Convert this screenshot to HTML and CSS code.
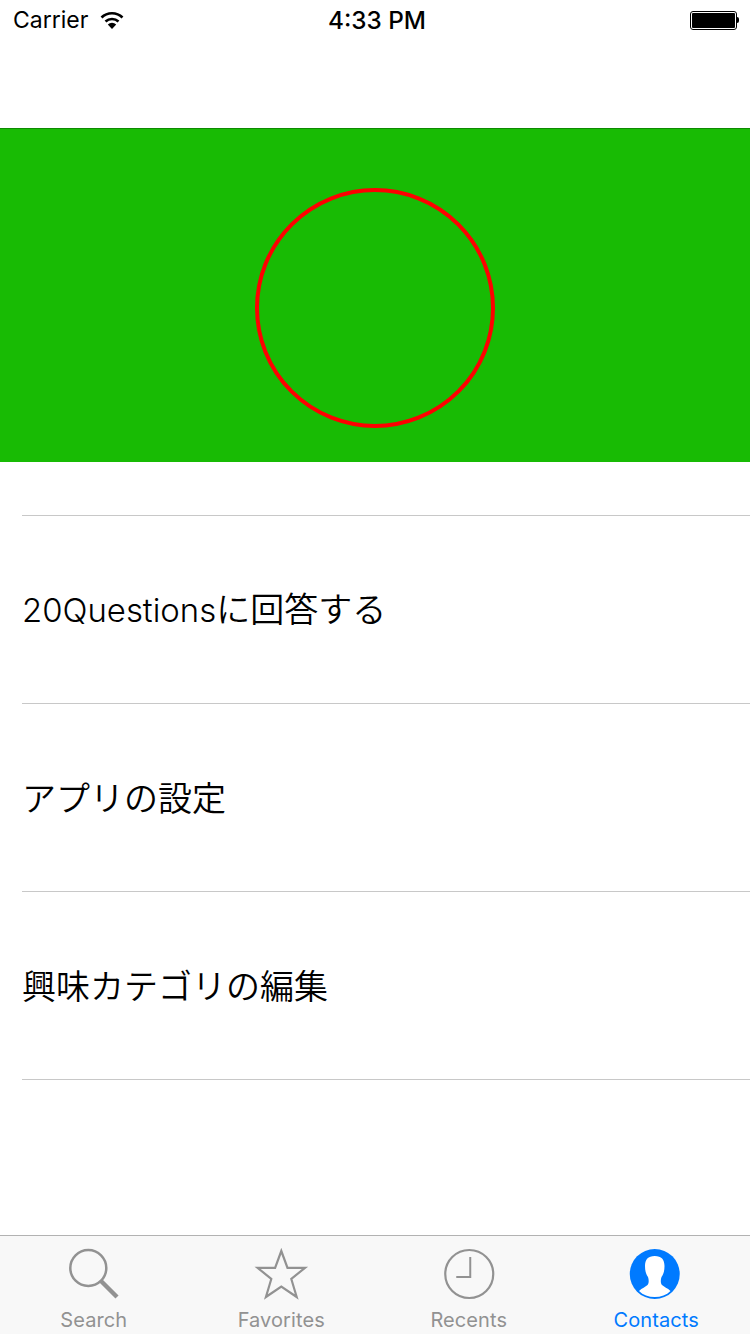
FILE: index.html
```html
<!DOCTYPE html>
<html lang="ja">
<head>
	<meta charset="UTF-8">
	<title>Menu</title>
	<link rel="stylesheet" href="styles.css">
</head>
<body>
	<div class="screen">
		<div class="statusBar">
			<div class="statusLeft">
				<span>Carrier</span>
				<svg class="wifi" width="26" height="20" viewBox="0 0 26 20">
					<path d="M13 19 8.800 14.500a6.200 6.200 0 0 1 8.400 0Z" fill="#000"/>
					<path d="M6.500 11.500a9.500 9.500 0 0 1 13 0" fill="none" stroke="#000" stroke-width="2.600"/>
					<path d="M2.500 7.500a15 15 0 0 1 21 0" fill="none" stroke="#000" stroke-width="2.600"/>
				</svg>
			</div>
			<div class="statusTime">4:33 PM</div>
			<div class="statusRight">
				<div class="battery"><div class="batteryFill"></div></div>
				<div class="batteryTip"></div>
			</div>
		</div>
		<div class="navSpace"></div>
		<div class="hero">
			<div class="heroCircle"></div>
		</div>
		<div class="menu">
			<div class="menuRow"><span><span class="latin">20Questions</span>に回答する</span></div>
			<div class="menuRow"><span>アプリの設定</span></div>
			<div class="menuRow"><span>興味カテゴリの編集</span></div>
		</div>
		<div class="tabBar">
			<div class="tabItem">
				<svg class="tabIcon" width="60" height="56" viewBox="0 0 60 56">
					<circle cx="24.300" cy="22" r="18" fill="none" stroke="#929292" stroke-width="2.500"/>
					<path d="M37 35 53 51" fill="none" stroke="#929292" stroke-width="4.500"/>
				</svg>
				<span class="tabLabel">Search</span>
			</div>
			<div class="tabItem">
				<svg class="tabIcon" width="60" height="56" viewBox="0 0 60 56">
					<path d="M30.300 5 36.500 21.800 54 21.800 40.300 33 45.700 51 30.300 40.500 14.900 51 20.300 33 6.600 21.800 24.100 21.800Z" fill="none" stroke="#929292" stroke-width="2.200"/>
				</svg>
				<span class="tabLabel">Favorites</span>
			</div>
			<div class="tabItem">
				<svg class="tabIcon" width="60" height="56" viewBox="0 0 60 56">
					<circle cx="30.250" cy="28" r="24" fill="none" stroke="#929292" stroke-width="2.200"/>
					<path d="M31.250 11V31H17.250" fill="none" stroke="#929292" stroke-width="2"/>
				</svg>
				<span class="tabLabel">Recents</span>
			</div>
			<div class="tabItem active">
				<svg class="tabIcon" width="60" height="56" viewBox="0 0 60 56">
					<circle cx="28.750" cy="28" r="25" fill="#007aff"/>
					<path d="M28.750 10C35.500 10 38.500 13.500 38.500 20 38.500 25 37.500 28 35.500 31 34.500 34 34.500 37 36 39 38 41 41.500 42 44.500 45 40.500 49 35 51 28.750 51 22.500 51 17 49 13 45 16 42 19.500 41 21.500 39 23 37 23 34 22 31 20 28 19 25 19 20 19 13.500 22 10 28.750 10Z" fill="#fff"/>
				</svg>
				<span class="tabLabel">Contacts</span>
			</div>
		</div>
	</div>
</body>
</html>
```

FILE: styles.css
```css
html, body {
  margin: 0;
  padding: 0;
  background: #fff;
}
.screen {
  width: 750px;
  height: 1334px;
  display: flex;
  flex-direction: column;
  overflow: hidden;
  font-family: "Inter", "Liberation Sans", "Noto Sans CJK JP", sans-serif;
  color: #000;
}
.statusBar {
  height: 40px;
  flex: none;
  display: flex;
  align-items: center;
  padding: 0 11px 0 13px;
  box-sizing: border-box;
  font-size: 23px;
}
.statusLeft {
  flex: 1;
  display: flex;
  align-items: center;
  gap: 11px;
}
.wifi {
  display: block;
}
.statusTime {
  font-weight: 500;
  font-size: 24.300px;
  margin-left: 2px;
}
.statusRight {
  flex: 1;
  display: flex;
  align-items: center;
  justify-content: flex-end;
}
.battery {
  width: 47px;
  height: 19px;
  border: 1px solid #000;
  border-radius: 3px;
  padding: 1px;
  box-sizing: border-box;
}
.batteryFill {
  width: 100%;
  height: 100%;
  background: #000;
  border-radius: 1px;
}
.batteryTip {
  width: 2px;
  height: 6px;
  background: #000;
  border-radius: 0 2px 2px 0;
}
.navSpace {
  height: 88px;
  flex: none;
}
.hero {
  height: 334px;
  flex: none;
  background: #18bb04;
  border-top: 1px solid #0e8a02;
  box-sizing: border-box;
  padding-top: 24px;
  display: flex;
  align-items: center;
  justify-content: center;
}
.heroCircle {
  width: 240px;
  height: 240px;
  border: 4px solid #f00;
  border-radius: 50%;
  box-sizing: border-box;
}
.menu {
  flex: 1;
  padding-top: 53px;
  margin-left: 22px;
}
.menuRow {
  height: 188px;
  box-sizing: border-box;
  border-top: 1px solid #c8c8c8;
  display: flex;
  align-items: center;
  font-size: 34px;
  font-weight: 350;
  padding-bottom: 2px;
}
.menuRow:first-child {
  padding-bottom: 4px;
}
.menuRow:last-child {
  height: 189px;
  border-bottom: 1px solid #c8c8c8;
  padding-bottom: 3px;
}
.latin {
  font-size: 32.900px;
}
.tabBar {
  height: 99px;
  flex: none;
  display: flex;
  background: #f8f8f8;
  border-top: 1px solid #b2b2b2;
  box-sizing: border-box;
}
.tabItem {
  width: 187.500px;
  display: flex;
  flex-direction: column;
  align-items: center;
  color: #929292;
  font-size: 20px;
  padding-top: 10px;
  box-sizing: border-box;
}
.tabItem.active {
  color: #007aff;
}
.tabIcon {
  display: block;
  flex: none;
}
.tabLabel {
  line-height: 24px;
  margin-top: 6px;
  letter-spacing: 0.1px;
}
```
